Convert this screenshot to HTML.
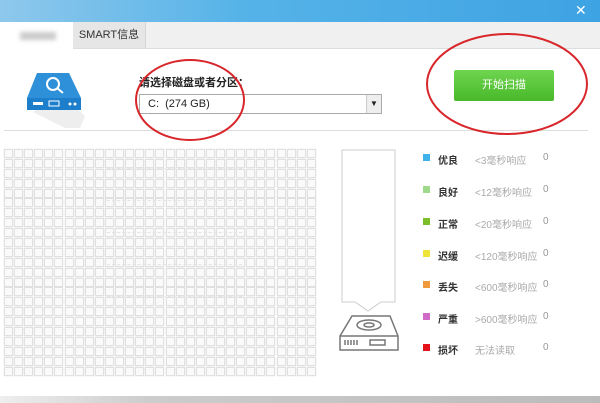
<!DOCTYPE html><html><head><meta charset="utf-8"><style>
body{margin:0;width:600px;height:403px;overflow:hidden;background:#fff;font-family:"Liberation Sans","Noto Sans CJK SC",sans-serif;position:relative}
.a{position:absolute}
.grid{left:4px;top:149px;display:grid;grid-template-columns:repeat(31,10.1px);grid-auto-rows:9.9px}
.grid div{width:7px;height:7px;border:1px solid #e0e0e0;background:#fafafa;box-shadow:0 0 1px #ddd}
.row{position:absolute;left:420px;width:200px;height:20px;font-size:10px}
.sq{position:absolute;left:3px;top:2px;width:7px;height:7px}
.n{position:absolute;left:18px;top:0;color:#333;font-weight:bold}
.d{position:absolute;left:55px;color:#aaa;white-space:nowrap}
.z{position:absolute;left:123px;color:#999}
.ln{position:absolute;left:107px;width:135px;border-top:1px dashed #e4e4e4}
</style></head><body>
<div class="a" style="left:0;top:0;width:600px;height:22px;background:linear-gradient(90deg,#8ec8ec,#56b3e8 40%,#3ea3e3)"></div>
<div class="a" style="left:575px;top:2px;color:#fff;font-size:14px">✕</div>
<div class="a" style="left:0;top:22px;width:600px;height:26px;background:#f0f0f0;border-bottom:1px solid #ddd"></div>
<div class="a" style="left:0;top:22px;width:73px;height:27px;background:#fff"></div>
<div class="a" style="left:20px;top:32px;width:36px;height:8px;background:#ccc;filter:blur(2px)"></div>
<div class="a" style="left:73px;top:22px;width:72px;height:26px;background:#e6e6e6;border-right:1px solid #d4d4d4;font-size:11px;color:#333;line-height:26px;text-align:center">SMART信息</div>
<svg class="a" style="left:25px;top:68px" width="70" height="65"><polygon points="30,20 60,48 55,60 40,60 8,44" fill="#eee"/><path d="M12,5 H44 L56,30 V42 H2 V30 Z" fill="#2e90d9"/><rect x="2" y="30" width="54" height="12" fill="#1d7fcc"/><circle cx="28" cy="16" r="6" fill="none" stroke="#fff" stroke-width="2"/><line x1="32" y1="20" x2="38" y2="25" stroke="#fff" stroke-width="2"/><rect x="8" y="34" width="10" height="3" fill="#fff"/><rect x="24" y="33" width="10" height="5" fill="none" stroke="#fff"/><circle cx="45" cy="36" r="1.5" fill="#fff"/><circle cx="50" cy="36" r="1.5" fill="#fff"/></svg>
<div class="a" style="left:139px;top:74px;font-size:11px;font-weight:bold;color:#222">请选择磁盘或者分区：</div>
<div class="a" style="left:139px;top:94px;width:241px;height:18px;border:1px solid #aaa;font-size:11px;line-height:18px;color:#222"><span style="margin-left:8px">C:&nbsp; (274 GB)</span><div class="a" style="right:0;top:0;width:14px;height:18px;background:#eee;border-left:1px solid #ccc;font-size:8px;text-align:center">▼</div></div>
<div class="a" style="left:454px;top:70px;width:100px;height:31px;background:linear-gradient(#6fd54f,#48b82a);border-radius:2px;color:#fff;font-size:11px;line-height:31px;text-align:center">开始扫描</div>
<div class="a" style="left:4px;top:130px;width:584px;border-top:1px solid #ddd"></div>
<svg class="a" style="left:0;top:0" width="600" height="403"><ellipse cx="190" cy="100" rx="54" ry="40" fill="none" stroke="#d8262b" stroke-width="2"/><ellipse cx="507" cy="84" rx="80" ry="50" fill="none" stroke="#d8262b" stroke-width="2"/>
<path d="M342,150 H395 V302 H381 L368,311 L355,302 H342 Z" fill="#fff" stroke="#ccc"/>
<g fill="none" stroke="#777" stroke-width="1.5"><path d="M352,316 H390 L398,336 V350 H340 V336 Z"/><line x1="340" y1="336" x2="398" y2="336"/><ellipse cx="369" cy="325" rx="12" ry="5"/><ellipse cx="369" cy="325" rx="5" ry="2"/><rect x="370" y="340" width="15" height="5"/><path d="M345,340 V345 M348,340 V345 M351,340 V345 M354,340 V345 M357,340 V345"/></g></svg>
<div class="a grid" id="g"></div>
<div class="row" style="top:152px"><div class="sq" style="background:#3fb2ea"></div><div class="n">优良</div><div class="d">&lt;3毫秒响应</div><div class="z">0</div></div>
<div class="row" style="top:184px"><div class="sq" style="background:#9fd98a"></div><div class="n">良好</div><div class="d">&lt;12毫秒响应</div><div class="z">0</div></div>
<div class="row" style="top:216px"><div class="sq" style="background:#7cbf2a"></div><div class="n">正常</div><div class="d">&lt;20毫秒响应</div><div class="z">0</div></div>
<div class="row" style="top:248px"><div class="sq" style="background:#eee43a"></div><div class="n">迟缓</div><div class="d">&lt;120毫秒响应</div><div class="z">0</div></div>
<div class="row" style="top:279px"><div class="sq" style="background:#f09a3e"></div><div class="n">丢失</div><div class="d">&lt;600毫秒响应</div><div class="z">0</div></div>
<div class="row" style="top:311px"><div class="sq" style="background:#cf6ac6"></div><div class="n">严重</div><div class="d">&gt;600毫秒响应</div><div class="z">0</div></div>
<div class="row" style="top:342px"><div class="sq" style="background:#e5121b"></div><div class="n">损坏</div><div class="d">无法读取</div><div class="z">0</div></div>
<div class="a ln" style="top:168px"></div><div class="a ln" style="top:200px"></div><div class="a ln" style="top:232px"></div><div class="a ln" style="top:264px"></div><div class="a ln" style="top:296px"></div><div class="a ln" style="top:327px"></div>
<div class="a" style="left:0;top:396px;width:600px;height:7px;background:linear-gradient(90deg,#eee,#ccc 25%,#bbb)"></div>
<script>var g=document.getElementById('g'),s='';for(var i=0;i<31*23;i++)s+='<div></div>';g.innerHTML=s;</script>
</body></html>
